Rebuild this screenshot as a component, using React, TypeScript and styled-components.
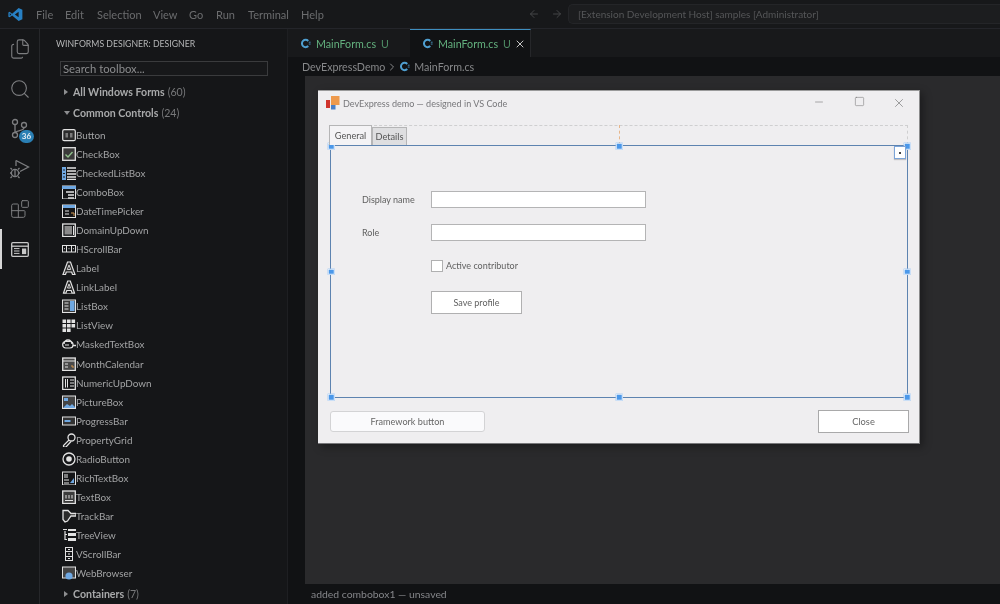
import React from "react";
import styled, { createGlobalStyle } from "styled-components";
import { ArrowLeft, ArrowRight, Files, Search, Blocks, X, Minus, Square, ChevronRight } from "lucide-react";

const Global = createGlobalStyle`
  html, body { margin: 0; padding: 0; background: #141517; }
  body { font-family: Lato, Roboto, "Liberation Sans", sans-serif; overflow: hidden; }
  * { box-sizing: border-box; }
`;

const Shell = styled.div`
  width: 1000px; height: 604px; display: flex; flex-direction: column;
  background: #141517; overflow: hidden; filter: blur(0.6px);
`;
const TitleBar = styled.header`
  height: 29px; flex: none; display: flex; align-items: center; background: #17181a;
  border-bottom: 1px solid #24252a;
`;
const Logo = styled.div`
  width: 36px; flex: none; display: flex; padding-left: 8px;
`;
const MenuItem = styled.span<{ $w: number }>`
  width: ${(p) => p.$w}px; font-size: 11px; color: #6b6c6e; flex: none;
`;
const NavArrows = styled.div`
  margin-left: 193px; display: flex; gap: 11px; color: #444547; width: 44px; flex: none;
`;
const CommandBox = styled.div`
  flex: 1; height: 20px; margin-left: -4px; background: #1c1d1f; border: 1px solid #242528;
  border-right: none; border-radius: 5px 0 0 5px; font-size: 10px; color: #555658; padding-left: 9px; line-height: 18px; white-space: nowrap;
`;
const Main = styled.div`
  flex: 1; display: flex; min-height: 0;
`;
const ActivityBar = styled.nav`
  width: 40px; flex: none; border-right: 1px solid #26272a; background: #151618;
  display: flex; flex-direction: column; align-items: center; color: #8c8d8f;
`;
const ActivityItem = styled.div<{ $active?: boolean }>`
  width: 39px; height: 40px; display: flex; align-items: center; justify-content: center; position: relative;
  color: ${(p) => (p.$active ? "#c8c8c8" : "#7d7e80")};
  ${(p) => p.$active && `border-left: 2px solid #d6d6d6; padding-right: 2px;`}
`;
const Badge = styled.span`
  position: absolute; left: 19px; top: 21px; width: 15px; height: 13px; border-radius: 7px; background: #2a7fb4;
  color: #e8eef4; font-size: 8px; font-weight: 700; line-height: 13px; text-align: center;
`;
const Sidebar = styled.aside`
  width: 248px; flex: none; background: #151618; border-right: 1px solid #1e1f22; display: flex; flex-direction: column; overflow: hidden;
`;
const SidebarTitle = styled.div`
  height: 30px; padding: 8px 0 0 16px; font-size: 8.7px; color: #b4b5b6; white-space: nowrap; line-height: 14px;
`;
const SearchInput = styled.div`
  margin: 2px 0 0 20px; width: 208px; height: 16px; border: 1px solid #3a3b3d; font-size: 11.3px;
  color: #8b8c8e; padding-left: 2px; line-height: 13px; background: #17181a;
`;
const Group = styled.div<{ $mt?: number }>`
  display: flex; align-items: center; height: 20px; margin-top: ${(p) => p.$mt ?? 0}px; padding-left: 24px;
  font-size: 10.6px; color: #a9aaab; white-space: nowrap;
  b { font-weight: 700; margin-right: 3px; }
  span { color: #77787a; }
`;
const Caret = styled.i<{ $open?: boolean }>`
  flex: none; height: 0; display: block;
  ${(p) => p.$open
    ? `border-left: 3px solid transparent; border-right: 3px solid transparent; border-top: 4px solid #8d8e90; width: 6px; margin-right: 3px;`
    : `border-top: 3px solid transparent; border-bottom: 3px solid transparent; border-left: 4px solid #8d8e90; width: 4px; margin-right: 5px;`}
`;
const ToolList = styled.ul`
  list-style: none; margin: 3px 0 0; padding: 0 0 0 22px;
`;
const ToolRow = styled.li`
  height: 19.04px; display: flex; align-items: center; font-size: 9.9px; color: #a3a4a5; white-space: nowrap;
`;
const ToolGlyph = styled.svg`
  width: 14px; height: 14px; flex: none;
`;
const Editor = styled.section`
  flex: 1; display: flex; flex-direction: column; min-width: 0;
`;
const TabBar = styled.div`
  height: 28px; flex: none; display: flex; background: #18191b;
`;
const EditorTab = styled.div<{ $active?: boolean }>`
  width: ${(p) => (p.$active ? 121 : 122)}px; display: flex; align-items: center; padding-left: 12px; gap: 5px;
  font-size: 10.7px; color: #63b07e; position: relative;
  background: ${(p) => (p.$active ? "#111214" : "#18191b")};
  ${(p) => p.$active && `border-top: 1px solid #3f8fc0; border-right: 1px solid #26272a; padding-bottom: 1px;`}
  em { font-style: normal; color: #4f8d65; }
`;
const TabClose = styled.span`
  position: absolute; right: 4px; top: 8px; color: #c6c6c6; display: flex;
`;
const Crumbs = styled.div`
  height: 19px; flex: none; display: flex; align-items: center; padding: 0 0 0 14px; gap: 1px; background: #111214;
  font-size: 10.7px; color: #87888a;
`;
const CanvasRow = styled.div`
  flex: 1; display: flex; background: #111214; padding-left: 17px; min-height: 0;
`;
const Canvas = styled.div`
  flex: 1; position: relative; background: #2a2a2c;
`;
const FormWindow = styled.div`
  position: absolute; left: 13px; top: 14px; width: 602px; height: 354px; background: #efeef0;
  border-top: 1px solid #9a9a9b; border-right: 1px solid #8b8b8c; border-bottom: 1px solid #77777a;
  box-shadow: 3px 3px 8px rgba(0,0,0,.35); color: #5e5e5e;
`;
const FormTitle = styled.div`
  height: 24px; display: flex; align-items: center; padding: 0 0 0 8px; font-size: 9.05px; color: #77777a; gap: 3px;
`;
const WindowButtons = styled.div`
  margin-left: auto; display: flex; color: #6d6d6d; width: 120px;
  span { width: 40px; display: flex; justify-content: center; }
`;
const TabStrip = styled.div`
  height: 20px; margin: 10px 0 0 11px; display: flex; align-items: flex-end; position: relative; width: 579px;
`;
const StripOutline = styled.div`
  position: absolute; left: 0; top: 0; right: 0; bottom: 0; border-top: 1px dashed #cfcfd0; border-right: 1px dashed #cfcfd0;
`;
const OrangeGuide = styled.div`
  position: absolute; left: 290px; top: 0; height: 20px; border-left: 1px dashed #e7b68a;
`;
const FormTab = styled.div<{ $active?: boolean }>`
  position: relative; z-index: 1; font-size: 9.2px; display: flex; align-items: center; justify-content: center;
  width: ${(p) => (p.$active ? 43 : 35)}px; height: ${(p) => (p.$active ? 20 : 18)}px;
  border: 1px solid #b5b5b6; border-bottom: none; background: ${(p) => (p.$active ? "#f4f3f5" : "#dedee0")}; color: #555;
`;
const DesignPanel = styled.div`
  position: relative; width: 578px; height: 253px; margin-left: 12px; border: 1.5px solid #5d83b0;
  padding: 45px 0 0 31px; display: flex; flex-direction: column;
`;
const Handle = styled.span<{ $x: string; $y: string }>`
  position: absolute; width: 6.5px; height: 6.5px; background: #4b98ea; border: 1px solid #e8f0fa;
  left: ${(p) => p.$x}; top: ${(p) => p.$y}; transform: translate(-50%, -50%);
`;
const SmartTag = styled.span`
  position: absolute; right: 1px; top: 0px; width: 12px; height: 13px; background: #fff; border: 1px solid #7ca4d8;
  display: flex; align-items: center; justify-content: center; box-shadow: 0 1px 1px rgba(0,0,0,.2);
  &::after { content: ""; width: 2px; height: 2px; background: #444; }
`;
const FieldRow = styled.div<{ $mb: number }>`
  display: grid; grid-template-columns: 69px 215px; align-items: center; margin-bottom: ${(p) => p.$mb}px; font-size: 9px; color: #5f5f5f;
`;
const FieldInput = styled.div`
  height: 17px; background: #fff; border: 1px solid #b4b4b5;
`;
const CheckRow = styled.div`
  margin: 0 0 19px 69px; display: flex; align-items: center; gap: 3px; height: 13px; font-size: 9px; color: #5f5f5f;
`;
const CheckMark = styled.span`
  width: 12px; height: 12px; background: #fff; border: 1px solid #b0b0b1;
`;
const SaveButton = styled.div`
  margin-left: 69px; width: 91px; height: 23px; background: #fff; border: 1px solid #b0b0b1; font-size: 9px; color: #5f5f5f;
  display: flex; align-items: center; justify-content: center;
`;
const FormFooter = styled.div`
  display: flex; justify-content: space-between; align-items: center; margin: 12px 10px 0 12px; height: 23px;
`;
const FrameworkButton = styled.div`
  width: 155px; height: 21px; background: #fafafc; border: 1px solid #d3d3d5; border-radius: 3px; font-size: 9.1px; color: #666;
  display: flex; align-items: center; justify-content: center;
`;
const CloseButton = styled.div`
  width: 91px; height: 23px; background: #fff; border: 1px solid #a9a9aa; font-size: 9.3px; color: #666;
  display: flex; align-items: center; justify-content: center;
`;
const StatusBar = styled.footer`
  height: 20px; flex: none; background: #111214; padding-left: 23px; font-size: 10.4px; color: #85868a; line-height: 20px;
`;

const CSharp = () => (
  <svg width="11" height="11" viewBox="0 0 12 12" fill="none">
    <path d="M9 3.2A4 4 0 1 0 9 8.8" stroke="#4f9fd0" strokeWidth="2.2" />
    <path d="M9.6 4.6h2M9.6 6.6h2" stroke="#4f9fd0" strokeWidth=".9" />
  </svg>
);

const VSCodeLogo = () => (
  <svg width="15" height="15" viewBox="0 0 24 24">
    <path d="M17 1.5 23 4.4v15.2L17 22.5 6.6 13.4 2.6 16.5.6 15.4V8.6l2-1.1 4 3.1L17 1.5Zm0 6L11 12l6 4.5v-9ZM2.8 9.6v4.8L5.2 12 2.8 9.6Z" fill="#2780c4" />
  </svg>
);

const GitIcon = () => (
  <svg width="22" height="24" viewBox="0 0 22 24" fill="none" stroke="currentColor" strokeWidth="1.3">
    <circle cx="6" cy="5" r="2.5" /><circle cx="6" cy="18" r="2.5" /><circle cx="15" cy="8" r="2.5" />
    <path d="M6 7.5v8M15 10.5c0 3.5-6 2.5-9 5" />
  </svg>
);
const DebugIcon = () => (
  <svg width="22" height="22" viewBox="0 0 22 22" fill="none" stroke="currentColor" strokeWidth="1.3">
    <path d="M7 2.5 19.5 9 11 13.5" /><path d="M7 2.5V8" />
    <circle cx="6" cy="15" r="3.6" /><path d="M2.4 15H1M9.6 15H11M3 11.5 1.5 10M9 11.5l1.5-1.5M3 18.5 1.5 20M9 18.5l1.5 1.5M6 11.4v7.2" />
  </svg>
);
const PanelIcon = () => (
  <svg width="18" height="15" viewBox="0 0 18 15" fill="none" stroke="currentColor" strokeWidth="1.3">
    <rect x=".7" y=".7" width="16.6" height="13.6" rx="1" />
    <path d="M.7 4.2h16.6" />
    <path d="M3 6.6h5.5M3 9h5.5M3 11.4h5.5" strokeWidth="1" />
    <rect x="11" y="6.5" width="4.2" height="5.6" fill="currentColor" stroke="none" />
  </svg>
);

const L = "#e2e2e2";
const B = "#6fa8e2";
const G = "#7a7a7a";
const glyphs: Record<string, React.ReactNode> = {
  Button: <><rect x=".7" y="1.7" width="12.6" height="11" rx="1.5" stroke={L} strokeWidth="1.2" fill="#2b2b2b" /><path d="M3.5 5h2.5v4.5H3.5zM8 5h2.5v4.5H8z" fill={G} /></>,
  CheckBox: <><rect x=".7" y=".7" width="12.6" height="12.6" fill="#3a3a3a" stroke={L} strokeWidth="1.3" /><path d="M3.5 7.5l2.5 2.5 4.5-5" stroke="#8fc08a" strokeWidth="1.4" fill="none" /></>,
  CheckedListBox: <><rect x="0" y="1" width="4" height="13" fill={B} /><path d="M1 4h2M1 7.5h2M1 11h2" stroke="#222" /><path d="M5 2h9M5 5h9M5 8h9M5 11h9M5 13.5h9" stroke={L} strokeWidth="1.3" /></>,
  ComboBox: <><rect x="0.5" y="1" width="13" height="13" fill="none" stroke={L} /><rect x="0" y="1" width="14" height="3" fill={B} /><path d="M4 7h8M6 10h6M6 13h6" stroke={L} strokeWidth="1.4" /></>,
  DateTimePicker: <><rect x="0.5" y="1" width="13" height="12.5" fill="none" stroke={L} /><rect x="1" y="1" width="12" height="3" fill={B} /><path d="M3 7h4M3 10h4" stroke={L} /><path d="M9 9h3v3" stroke="#d89a50" fill="none" /></>,
  DomainUpDown: <><rect x=".7" y="1" width="12.6" height="12.5" fill="none" stroke={L} strokeWidth="1.3" /><rect x="2.5" y="3" width="7.5" height="8.5" fill="#8a8a8a" /><path d="M11.5 3v9" stroke={L} /></>,
  HScrollBar: <><rect x="0.5" y="3.5" width="13" height="6.5" fill="none" stroke={L} /><path d="M4.5 4v6M9.5 4v6" stroke={L} /><path d="M2 6.7h1M6.5 6.7h1M11 6.7h1" stroke={L} /></>,
  Label: <><path d="M1 13.5 5.5 1h3L13 13.5h-2.5L9.7 11H4.3l-.8 2.5z" stroke={L} strokeWidth="1.2" fill="#2a2a2a" /><path d="M5.3 8.5 7 4l1.7 4.5z" stroke={L} strokeWidth=".9" fill="none" /></>,
  LinkLabel: <><path d="M1.5 13 5.7 1h2.6L12.5 13H10l-.8-2.5H4.8L4 13z" stroke={L} strokeWidth="1.2" fill="#2a2a2a" /><path d="M5.5 8 7 4l1.5 4z" stroke={L} strokeWidth=".9" fill="none" /><path d="M1 14h12" stroke={L} /></>,
  ListBox: <><rect x="0.5" y="1" width="13" height="12.5" fill="#3a3a3a" stroke={L} /><path d="M2.5 4h4M2.5 7h4M2.5 10h4" stroke={L} /><rect x="8" y="2" width="4.5" height="10" fill={B} /></>,
  ListView: <path d="M.5 1.5h3.6v3.6H.5zM5 1.5h3.6v3.6H5zM9.5 1.5h3.6v3.6H9.5zM.5 6h3.6v3.6H.5zM5 6h3.6v3.6H5zM9.5 6h3.6v3.6H9.5zM.5 10.5h3.6v3.5H.5zM5 10.5h3.6v3.5H5z" fill={L} />,
  MaskedTextBox: <><path d="M2 7a4 4 0 0 1 8 0" stroke={L} fill="none" strokeWidth="1.4" /><rect x="0.7" y="4.5" width="10.3" height="6.5" rx="3" fill="none" stroke={L} strokeWidth="1.2" /><path d="M3 8h4" stroke={L} /><path d="M11 8.5h3" stroke={L} strokeWidth="1.5" /></>,
  MonthCalendar: <><rect x=".7" y="1" width="12.6" height="12.5" fill="#4a4a4a" stroke={L} strokeWidth="1.3" /><path d="M1 4h12" stroke={L} /><path d="M3 7h3M3 10h3" stroke={L} /><path d="M9 9h2v2" stroke="#d89a50" fill="none" /></>,
  NumericUpDown: <><rect x=".7" y="1" width="12.6" height="12.5" fill="none" stroke={L} strokeWidth="1.3" /><path d="M3.5 3v8.5M5.5 3v8.5" stroke={L} /><path d="M8 4h4M8 7h4M8 10h4" stroke={L} /></>,
  PictureBox: <><rect x="0.5" y="1" width="13" height="12.5" fill="#444" stroke={L} /><path d="M1 13l4-4 3 2 2-2 3 3v1H1z" fill={B} /><rect x="2" y="3" width="4" height="3" fill={B} /></>,
  ProgressBar: <><rect x="0.5" y="3" width="13" height="8" fill="#333" stroke={L} /><rect x="2.5" y="6" width="6" height="2" fill={B} /></>,
  PropertyGrid: <><circle cx="9.5" cy="4.5" r="3.5" fill="none" stroke={L} strokeWidth="1.3" /><path d="M7 7 1.5 12.5v1.5H4l5-5.5" fill="none" stroke={L} strokeWidth="1.2" /></>,
  RadioButton: <><circle cx="7" cy="7" r="6" fill="none" stroke={L} strokeWidth="1.3" /><circle cx="7" cy="7" r="2.8" fill={L} /></>,
  RichTextBox: <><rect x="0.5" y="1" width="13" height="13" fill="none" stroke={L} /><path d="M2 4h4M2 6h4M2 9h5M2 12h5" stroke={L} /><path d="M8 12l4-5v5z" fill={B} /></>,
  TextBox: <><rect x=".7" y="1" width="12.6" height="12.5" fill="#3c3c3c" stroke={L} strokeWidth="1.3" /><path d="M3 10.5h8M4 8.5V5M7 8.5V5M10 8.5V5" stroke={L} /></>,
  TrackBar: <path d="M1 1.5h5l3 3h5v2.5H9L5.5 12 3 13 1 10.5z" stroke={L} fill="#2a2a2a" strokeWidth="1.3" />,
  TreeView: <><path d="M1 1.5h4M3 3v9M3 6.5h2M3 11.5h2" stroke={L} strokeWidth="1.2" /><path d="M6 5h8v3H6zM6 10h8v3H6zM6 1h8v2H6z" fill={L} /></>,
  VScrollBar: <><rect x="3.5" y="0.5" width="7" height="13" fill="none" stroke={L} /><path d="M4 4.5h6M4 9.5h6" stroke={L} /><path d="M6 2.5h2M6 7h2M6 11.5h2" stroke={L} /></>,
  WebBrowser: <><rect x="0.5" y="1" width="13" height="11" fill="#444" stroke={L} /><circle cx="7" cy="10" r="3.6" fill={B} /></>,
};
const tools = Object.keys(glyphs);
const menu: [string, number][] = [["File", 29], ["Edit", 32], ["Selection", 56], ["View", 36], ["Go", 27], ["Run", 32], ["Terminal", 53], ["Help", 34]];

export default function App() {
  return (
    <Shell>
      <Global />
      <TitleBar>
        <Logo><VSCodeLogo /></Logo>
        {menu.map(([m, w]) => <MenuItem key={m} $w={w}>{m}</MenuItem>)}
        <NavArrows>
          <ArrowLeft size={12} />
          <ArrowRight size={12} />
        </NavArrows>
        <CommandBox>[Extension Development Host] samples [Administrator]</CommandBox>
      </TitleBar>
      <Main>
        <ActivityBar>
          <ActivityItem><Files size={22} strokeWidth={1.2} /></ActivityItem>
          <ActivityItem><Search size={22} strokeWidth={1.2} /></ActivityItem>
          <ActivityItem><GitIcon /><Badge>36</Badge></ActivityItem>
          <ActivityItem><DebugIcon /></ActivityItem>
          <ActivityItem><Blocks size={20} strokeWidth={1.2} /></ActivityItem>
          <ActivityItem $active><PanelIcon /></ActivityItem>
        </ActivityBar>
        <Sidebar>
          <SidebarTitle>WINFORMS DESIGNER: DESIGNER</SidebarTitle>
          <SearchInput>Search toolbox...</SearchInput>
          <Group $mt={6}><Caret /><b>All Windows Forms</b><span>(60)</span></Group>
          <Group $mt={1}><Caret $open /><b>Common Controls</b><span>(24)</span></Group>
          <ToolList>
            {tools.map((t) => (
              <ToolRow key={t}>
                <ToolGlyph viewBox="0 0 14 14">{glyphs[t]}</ToolGlyph>
                {t}
              </ToolRow>
            ))}
          </ToolList>
          <Group $mt={2}><Caret /><b>Containers</b><span>(7)</span></Group>
        </Sidebar>
        <Editor>
          <TabBar>
            <EditorTab><CSharp />MainForm.cs<em>U</em></EditorTab>
            <EditorTab $active><CSharp />MainForm.cs<em>U</em><TabClose><X size={12} /></TabClose></EditorTab>
          </TabBar>
          <Crumbs>DevExpressDemo<ChevronRight size={12} /><CSharp />&nbsp;MainForm.cs</Crumbs>
          <CanvasRow>
            <Canvas>
              <FormWindow>
                <FormTitle>
                  <svg width="14" height="14" viewBox="0 0 14 14">
                    <rect x="0" y="4" width="4" height="8" fill="#d0342c" />
                    <rect x="5" y="0" width="8.5" height="9" fill="#ee9a4d" />
                    <rect x="5" y="9" width="4.5" height="4.5" fill="#4a80c8" />
                  </svg>
                  DevExpress demo — designed in VS Code
                  <WindowButtons>
                    <span><Minus size={12} strokeWidth={1.1} /></span>
                    <span><Square size={11} strokeWidth={1.1} /></span>
                    <span><X size={14} strokeWidth={1.1} /></span>
                  </WindowButtons>
                </FormTitle>
                <TabStrip>
                  <StripOutline />
                  <OrangeGuide />
                  <FormTab $active>General</FormTab>
                  <FormTab>Details</FormTab>
                </TabStrip>
                <DesignPanel>
                  <Handle $x="0%" $y="0%" /><Handle $x="50%" $y="0%" /><Handle $x="100%" $y="0%" />
                  <Handle $x="0%" $y="50%" /><Handle $x="100%" $y="50%" />
                  <Handle $x="0%" $y="100%" /><Handle $x="50%" $y="100%" /><Handle $x="100%" $y="100%" />
                  <SmartTag />
                  <FieldRow $mb={16}><span>Display name</span><FieldInput /></FieldRow>
                  <FieldRow $mb={18}><span>Role</span><FieldInput /></FieldRow>
                  <CheckRow><CheckMark />Active contributor</CheckRow>
                  <SaveButton>Save profile</SaveButton>
                </DesignPanel>
                <FormFooter>
                  <FrameworkButton>Framework button</FrameworkButton>
                  <CloseButton>Close</CloseButton>
                </FormFooter>
              </FormWindow>
            </Canvas>
          </CanvasRow>
          <StatusBar>added combobox1 — unsaved</StatusBar>
        </Editor>
      </Main>
    </Shell>
  );
}
